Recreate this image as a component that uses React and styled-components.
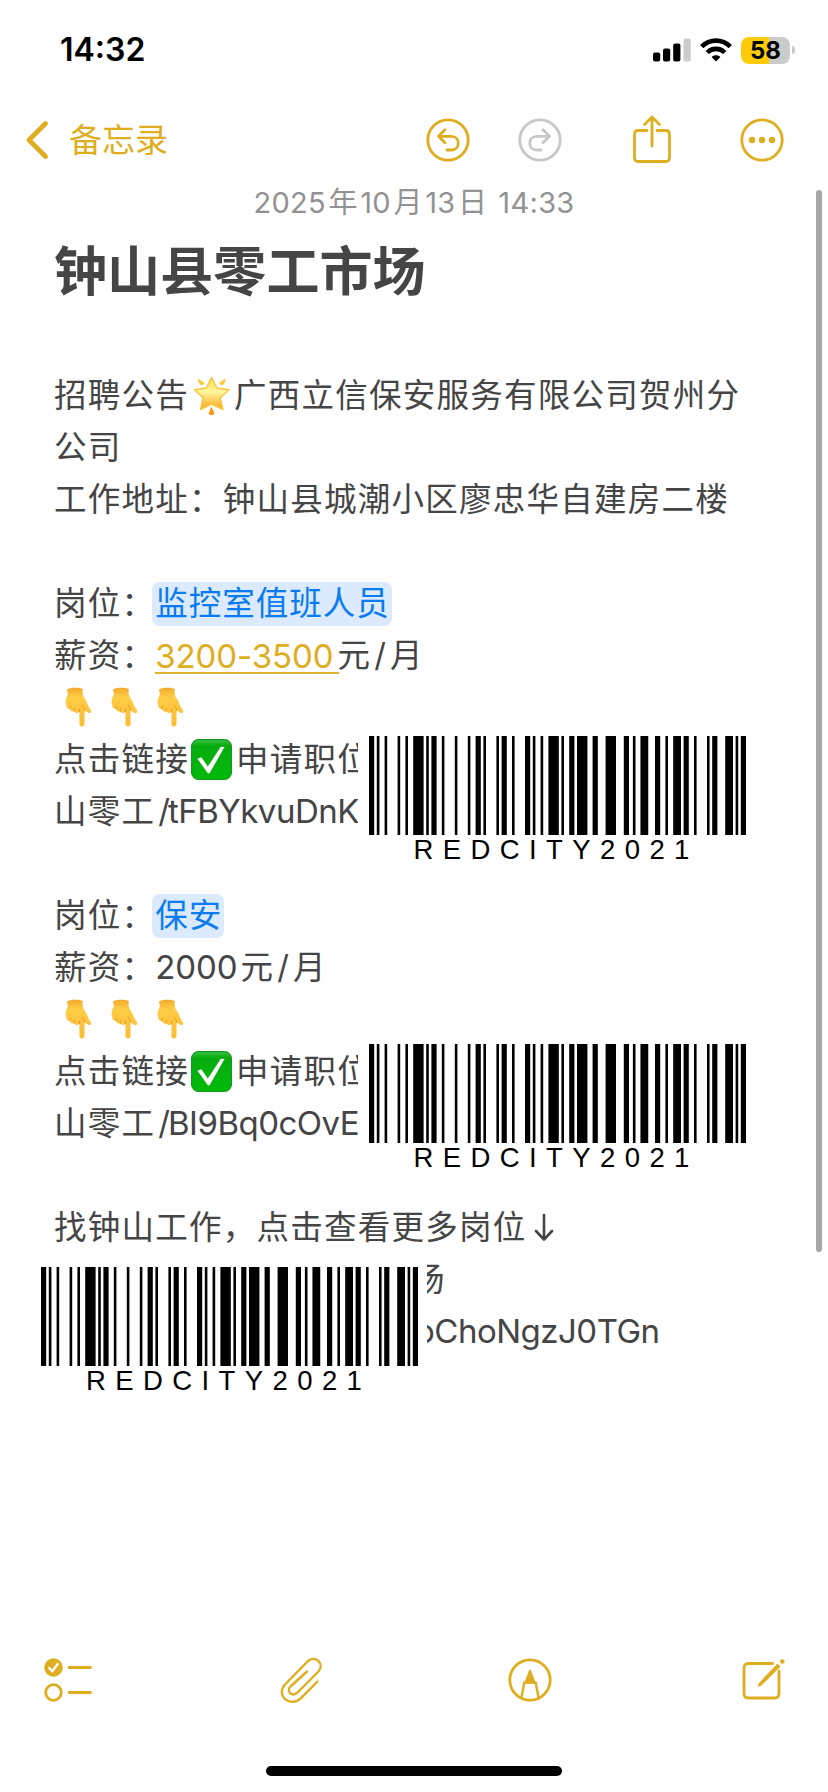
import React from 'react'
import styled, { createGlobalStyle } from 'styled-components'

const BARS = [
  [0, 2], [3, 1], [6, 1], [11, 1], [14, 1], [17, 4], [22, 1], [24, 2],
  [28, 1], [33, 1], [38, 1], [41, 2], [44, 1], [49, 1], [51, 2], [55, 1],
  [60, 2], [63, 1], [66, 1], [69, 4], [74, 1], [77, 2], [80, 4], [86, 2],
  [91, 4], [98, 2], [101.5, 1], [104.4, 3], [110, 2], [114, 1], [117, 3],
  [121, 2], [125, 1], [130, 1], [132, 2], [137, 3], [141, 1], [143, 2],
]

const Barcode = () => (
  <>
    <BarcodeLines viewBox='0 0 145 99' preserveAspectRatio='none'>
      {BARS.map(([x, w]) => (
        <rect key={x} x={x} y='0' width={w} height='99' />
      ))}
    </BarcodeLines>
    <BarcodeLabel>REDCITY2021</BarcodeLabel>
  </>
)

const Finger = () => (
  <FingerIcon viewBox='0 0 28 42'>
    <defs>
      <linearGradient id='skin' x1='0' y1='0' x2='0' y2='1'>
        <stop offset='0' stopColor='#f0a92c' />
        <stop offset='0.25' stopColor='#ffcd45' />
        <stop offset='1' stopColor='#fbbb35' />
      </linearGradient>
    </defs>
    <path
      d='M1.800 2.500C5 .2 14.500 .2 18.500 2.200C18.200 6 18 9 20.500 12.200C23 15.500 23.700 20 27 24.500C28.200 26.800 25.700 28.200 23.800 26.800L20.300 24.500V38.800C20.300 42.200 15 42.200 15 38.800V26.300C13 27.700 10.500 27.500 9.600 25.700C7.500 26.100 5.400 25 5 23C2.700 23 1 21.400 1.200 18.900C-.3 15 1 11.500 2.600 8.500C3 6.500 2.300 4.500 1.800 2.500Z'
      fill='url(#skin)'
    />
    <path
      d='M5 22.600C4.800 21.500 5 20.500 5.600 19.800M9.600 25.200C9.200 24 9.400 22.800 10.200 22M15 26V23M20.300 24.500C20 22 19.200 20.500 18 19.300'
      fill='none'
      stroke='#e09a22'
      strokeWidth='1'
      strokeLinecap='round'
    />
  </FingerIcon>
)

const Star = () => (
  <StarIcon viewBox='0 0 38 40'>
    <defs>
      <linearGradient id='star' x1='0' y1='0' x2='0' y2='1'>
        <stop offset='0' stopColor='#ffd84a' />
        <stop offset='0.45' stopColor='#fff6a0' />
        <stop offset='1' stopColor='#fba51c' />
      </linearGradient>
    </defs>
    <path
      d='M18.500 1.500L23.800 12L36 13.800L27.200 21.800L30 33.500L18.500 28L7.500 33.500L10 21.800L1.500 13.800L13.300 12Z'
      fill='url(#star)'
      stroke='#f9c63a'
      strokeWidth='1.400'
      strokeLinejoin='round'
    />
    <path d='M5 2.500L11.500 7L9 9.500C6.500 8.500 5 6 5 2.500Z' fill='#fbc82f' />
    <path d='M32.500 2.500L26 7L28.500 9.500C31 8.500 32.500 6 32.500 2.500Z' fill='#fbc82f' />
    <path d='M18.500 30.500L21.500 37.500C20 39.500 17 39.500 15.500 37.500Z' fill='#f59a16' />
  </StarIcon>
)

const Check = () => (
  <CheckIcon viewBox='0 0 41 41'>
    <defs>
      <linearGradient id='green' x1='0' y1='0' x2='0' y2='1'>
        <stop offset='0' stopColor='#3fc24a' />
        <stop offset='0.15' stopColor='#08ab10' />
        <stop offset='1' stopColor='#02ba08' />
      </linearGradient>
    </defs>
    <rect x='0.600' y='0.600' width='39.800' height='39.800' rx='7' fill='url(#green)' stroke='#129a20' strokeWidth='1.200' />
    <path d='M6.500 19.800L10.300 18.300L16.800 27.500L29.800 7.800L33.500 8L18.600 34.200H16.800Z' fill='#fff' />
  </CheckIcon>
)

const Job = ({ title, salary, code }) => (
  <>
    <Line>
      岗位：<Mark>{title}</Mark>
    </Line>
    <Line>薪资：{salary}</Line>
    <Fingers>
      <Finger />
      <Finger />
      <Finger />
    </Fingers>
    <Line>
      点击链接
      <Check />
      申请职位
    </Line>
    <Line>
      山零工<Slash>/</Slash>
      <Code>{code}</Code>
    </Line>
  </>
)

const App = () => {
  return (
    <Phone>
      <GlobalStyle />
      <StatusBar>
        <Clock>14:32</Clock>
        <StatusIcons>
          <svg width='38' height='24' viewBox='0 0 38 24'>
            <rect x='0' y='14.500' width='7.200' height='9' rx='2' />
            <rect x='10' y='10.500' width='7.200' height='13' rx='2' />
            <rect x='20.200' y='5.500' width='7.200' height='18' rx='2' />
            <rect x='30.500' y='0.500' width='7.200' height='23' rx='2' fill='#cbcbcb' />
          </svg>
          <svg width='32' height='24' viewBox='0 0 32 24'>
            <g fill='none' stroke='#000' strokeWidth='4.600'>
              <path d='M1.700 8.700C9.500 .6 22.500 .6 30.300 8.700' />
              <path d='M7.200 14.500C12 9.600 20 9.600 24.800 14.500' />
            </g>
            <path d='M11.600 19C14 16.800 18 16.800 20.400 19L16 23.600Z' />
          </svg>
          <BatteryWrap>
            <Battery>58</Battery>
            <BatteryTip />
          </BatteryWrap>
        </StatusIcons>
      </StatusBar>

      <NavBar>
        <Back>
          <svg width='24' height='40' viewBox='0 0 24 40'>
            <path d='M20.500 3.500L4 20L20.500 36.500' fill='none' stroke='currentColor' strokeWidth='4.800' strokeLinecap='round' strokeLinejoin='round' />
          </svg>
          备忘录
        </Back>
        <NavIcons>
          <Icon $w={44} $h={44} viewBox='0 0 44 44'>
            <circle cx='22' cy='22' r='20.200' />
            <path d='M19 11.800L12.500 18.300L19 24.800M12.500 18.300H25.500C34.500 18.300 34.500 32 25.500 32H21' />
          </Icon>
          <Icon $w={44} $h={44} $ml={48} $color='#c7c7c7' viewBox='0 0 44 44'>
            <circle cx='22' cy='22' r='20.200' />
            <path d='M25 11.800L31.500 18.300L25 24.800M31.500 18.300H18.500C9.500 18.300 9.500 32 18.500 32H23' />
          </Icon>
          <Icon $w={44} $h={50} $ml={68} viewBox='0 0 44 50'>
            <path d='M17 15.500H8.500Q4.500 15.500 4.500 19.500V42.500Q4.500 46.500 8.500 46.500H35.500Q39.500 46.500 39.500 42.500V19.500Q39.500 15.500 35.500 15.500H27' />
            <path d='M22 31V2.500M14.500 9.500L22 2L29.500 9.500' />
          </Icon>
          <Icon $w={44} $h={44} $ml={66} viewBox='0 0 44 44'>
            <circle cx='22' cy='22' r='20.200' />
            <g fill='currentColor' stroke='none'>
              <circle cx='12' cy='22' r='3.200' />
              <circle cx='22' cy='22' r='3.200' />
              <circle cx='32' cy='22' r='3.200' />
            </g>
          </Icon>
        </NavIcons>
      </NavBar>

      <Note>
        <NoteDate>
          2025<i>年</i>10<i>月</i>13<i>日</i> 14:33
        </NoteDate>
        <Title>钟山县零工市场</Title>
        <Body>
          <Line>
            招聘公告
            <Star />
            广西立信保安服务有限公司贺州分
          </Line>
          <Line>公司</Line>
          <Line>工作地址：钟山县城潮小区廖忠华自建房二楼</Line>
          <Line />
          <JobBlock>
            <Job
              title='监控室值班人员'
              salary={
                <>
                  <Amount>3200-3500</Amount>元<Slash $gap>/</Slash>月
                </>
              }
              code='tFBYkvuDnK'
            />
            <Sticker $left={357.500} $top={149}>
              <Barcode />
            </Sticker>
          </JobBlock>
          <Line />
          <JobBlock>
            <Job
              title='保安'
              salary={
                <>
                  <Plain>2000</Plain>元<Slash $gap>/</Slash>月
                </>
              }
              code='BI9Bq0cOvE'
            />
            <Sticker $left={357.500} $top={145}>
              <Barcode />
            </Sticker>
          </JobBlock>
          <Line />
          <JobBlock>
            <Line>
              找钟山工作，点击查看更多岗位
              <Arrow viewBox='0 0 24 34'>
                <path d='M12 4V28M4 20L12 28.500L20 20' />
              </Arrow>
            </Line>
            <Line $indent={358}>场</Line>
            <Line $indent={363}>
              <Code>oChoNgzJ0TGn</Code>
            </Line>
            <Sticker $left={30} $top={56}>
              <Barcode />
            </Sticker>
          </JobBlock>
        </Body>
        <Scrollbar />
      </Note>

      <Toolbar>
        <Icon $w={50} $h={46} viewBox='0 0 50 46'>
          <circle cx='10.500' cy='10.500' r='9.300' fill='currentColor' stroke='none' />
          <path d='M6.200 11L9.300 14.300L14.700 7' stroke='#fff' strokeWidth='2.200' />
          <circle cx='10.500' cy='35.500' r='7.800' />
          <path d='M26 10.500H47.500M26 35.500H47.500' />
        </Icon>
        <Icon $w={44} $h={48} $ml={186} viewBox='0 0 44 48'>
          <path
            d='M38.500 25.500L22 42.200C10.500 52.500 -3.500 39 6 28.500L28.500 5.500C36 -1.500 46 7.500 39.500 15.500L18.500 36.500C12.500 41.500 7 35 11.500 30.500L28 15.500'
            strokeWidth='2.400'
          />
        </Icon>
        <Icon $w={44} $h={44} $ml={185} viewBox='0 0 44 44'>
          <circle cx='22' cy='22' r='20.200' />
          <path d='M13.500 39.500L16.300 24.500H27.700L30.500 39.500' strokeWidth='2.200' />
          <path d='M21 12.500Q22 10.500 23 12.500L28 25.500H16Z' fill='currentColor' stroke='none' />
        </Icon>
        <Icon $w={46} $h={44} $ml={189} viewBox='0 0 46 44'>
          <path d='M31.500 5.500H7.500Q3 5.500 3 10V35.500Q3 40 7.500 40H33.500Q38 40 38 35.500V13' />
          <path d='M36.500 5.500L39.500 8.500L20.500 27.500L16.500 29L18 25Z' fill='currentColor' stroke='none' />
          <circle cx='41.300' cy='3.500' r='2.300' fill='currentColor' stroke='none' />
        </Icon>
      </Toolbar>
      <HomeBar />
    </Phone>
  )
}

const GlobalStyle = createGlobalStyle`
  body {
    margin: 0;
    background: #fefefe;
  }
  * {
    box-sizing: border-box;
  }
`

const Phone = styled.div`
  width: 828px;
  height: 1792px;
  display: flex;
  flex-direction: column;
  overflow: hidden;
  background: #fefefe;
  color: #454545;
  font-family: Inter, 'Noto Sans CJK SC', sans-serif;
`

const StatusBar = styled.header`
  height: 100px;
  padding: 0 33px 0 60px;
  display: flex;
  align-items: center;
  justify-content: space-between;
  color: #000;
`

const Clock = styled.span`
  font-size: 32px;
  font-weight: 600;
  line-height: 40px;
`

const StatusIcons = styled.div`
  display: flex;
  align-items: center;
  gap: 9px;
`

const BatteryWrap = styled.div`
  display: flex;
  align-items: center;
  gap: 2px;
`

const Battery = styled.div`
  width: 49px;
  height: 27px;
  border-radius: 8px;
  background: linear-gradient(90deg, #fdcb08 58%, #cbcbcb 58%);
  font-size: 24px;
  font-weight: 700;
  line-height: 27px;
  text-align: center;
`

const BatteryTip = styled.div`
  width: 3px;
  height: 8px;
  border-radius: 0 3px 3px 0;
  background: #cbcbcb;
`

const NavBar = styled.nav`
  height: 80px;
  padding: 0 44px 0 25px;
  display: flex;
  align-items: center;
  justify-content: space-between;
  color: #deae20;
`

const Back = styled.div`
  display: flex;
  align-items: center;
  gap: 20px;
  font-size: 33px;
  line-height: 40px;
`

const NavIcons = styled.div`
  display: flex;
  align-items: center;
`

const Icon = styled.svg`
  width: ${(p) => p.$w}px;
  height: ${(p) => p.$h}px;
  margin-left: ${(p) => p.$ml || 0}px;
  color: ${(p) => p.$color || '#deae20'};
  fill: none;
  stroke: currentColor;
  stroke-width: 2.8px;
  stroke-linecap: round;
  stroke-linejoin: round;
  [stroke-width] {
    stroke-width: 2.4px;
  }
`

const Note = styled.main`
  position: relative;
  height: 1440px;
`

const NoteDate = styled.div`
  height: 46px;
  color: #929292;
  font-size: 29px;
  line-height: 46px;
  letter-spacing: 0.3px;
  text-align: center;
  white-space: pre;
  i {
    margin: 0 2.5px;
    font-style: normal;
  }
`

const Title = styled.h1`
  margin: 0;
  padding: 10px 0 0 54px;
  height: 144px;
  font-size: 53px;
  font-weight: 700;
  line-height: 72px;
  letter-spacing: 0.1px;
`

const Body = styled.div`
  font-size: 32.5px;
  letter-spacing: 1.25px;
`

const Line = styled.div`
  height: 52px;
  padding-left: ${(p) => p.$indent || 0}px;
  margin-left: 54px;
  display: flex;
  align-items: center;
  line-height: 52px;
  white-space: pre;
`

const JobBlock = styled.section`
  position: relative;
`

const Mark = styled.span`
  height: 44px;
  margin-left: -3px;
  padding: 0 2px 0 3px;
  border-radius: 8px;
  background: #dbeafc;
  color: #0a7bf0;
  line-height: 43px;
  letter-spacing: 1px;
`

const Amount = styled.span`
  height: 36px;
  padding-right: 6px;
  border-bottom: 2px solid #e0b32f;
  color: #deae20;
  font-size: 33px;
  line-height: 36px;
  letter-spacing: -0.1px;
  margin-right: -2px;
`

const Plain = styled.span`
  margin: 0 3px 2px 0;
  font-size: 33px;
  letter-spacing: -0.1px;
`

const Slash = styled.span`
  margin: ${(p) => (p.$gap ? '0 4px 0 3px' : '0 0 0 3px')};
  letter-spacing: 0;
`

const Code = styled.span`
  margin: 0 0 2px -2px;
  font-size: 33px;
  letter-spacing: -0.5px;
`

const Fingers = styled.div`
  height: 52px;
  padding: 5px 0 0 65px;
  display: flex;
  gap: 19px;
`

const FingerIcon = styled.svg`
  width: 27px;
  height: 40px;
`

const StarIcon = styled.svg`
  width: 38px;
  height: 40px;
  margin: 0 3px 0 4px;
`

const CheckIcon = styled.svg`
  width: 41px;
  height: 41px;
  margin: 0 4px 2px 2px;
`

const Arrow = styled.svg`
  width: 24px;
  height: 34px;
  margin-left: 5px;
  fill: none;
  stroke: #454545;
  stroke-width: 2.6px;
  stroke-linecap: round;
  stroke-linejoin: round;
`

/* printed label stuck over the note text */
const Sticker = styled.div`
  position: absolute;
  left: ${(p) => p.$left}px;
  top: ${(p) => p.$top}px;
  width: 397px;
  padding: 9px 9px 0 11px;
  height: 140px;
  background: #fefefe;
`

const BarcodeLines = styled.svg`
  display: block;
  width: 377px;
  height: 99px;
  fill: #000;
`

const BarcodeLabel = styled.div`
  padding-left: 45px;
  color: #000;
  font-family: 'Liberation Sans', sans-serif;
  font-size: 27.5px;
  line-height: 29px;
  letter-spacing: 9.4px;
`

const Scrollbar = styled.div`
  position: absolute;
  top: 10px;
  right: 6px;
  width: 6px;
  height: 1062px;
  border-radius: 3px;
  background: #a7a7a7;
`

const Toolbar = styled.footer`
  height: 120px;
  padding-left: 43px;
  display: flex;
  align-items: center;
`

const HomeBar = styled.div`
  width: 296px;
  height: 10px;
  margin: 26px 0 0 266px;
  border-radius: 5px;
  background: #000;
`

export default App
